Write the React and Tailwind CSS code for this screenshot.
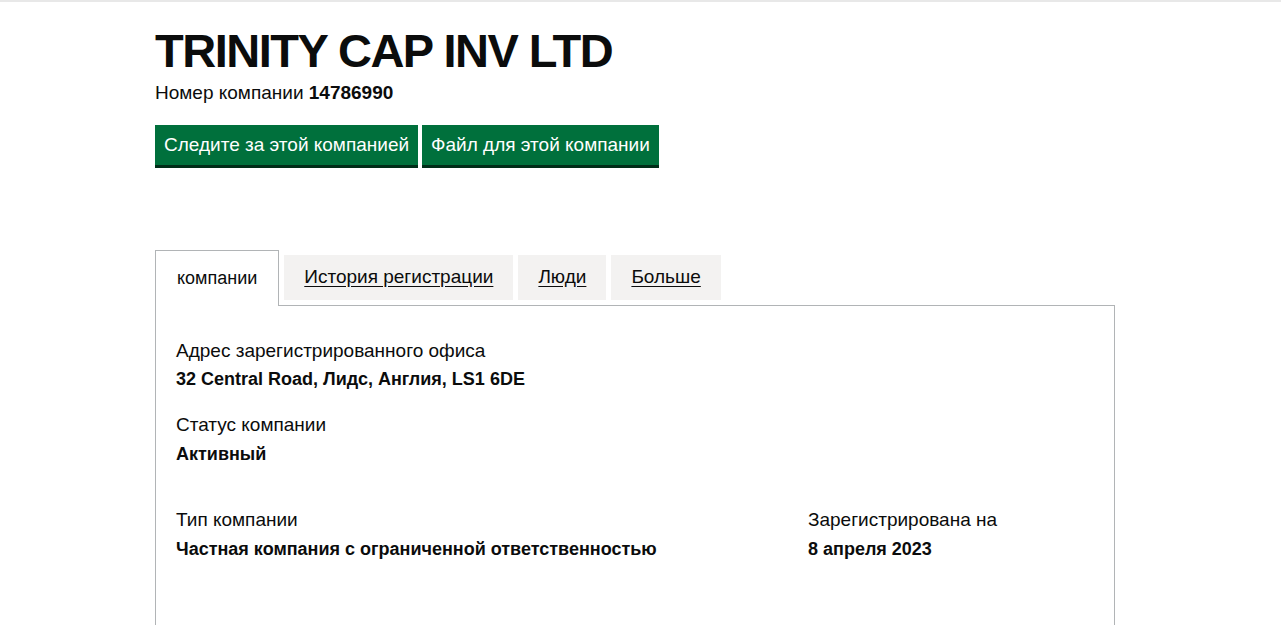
export default function App() {
  return (
    <div className="min-h-[625px] bg-white border-t-2 border-[#e8e8e8] text-[#0b0c0c]">
      <div className="w-[960px] ml-[155px] font-['Liberation_Sans',Arial,sans-serif]">
        <h1 className="pt-[24px] text-[47px] leading-[50px] font-bold tracking-[-1.5px]">TRINITY CAP INV LTD</h1>
        <p className="mt-[4px] text-[19px] leading-[25px]">
          Номер компании <strong className="font-bold">14786990</strong>
        </p>
        <div className="mt-[20px] flex gap-[4px]">
          <a className="h-[40px] px-[9px] flex items-center bg-[#00703c] text-white text-[19px] shadow-[0_3px_0_#002d18] mb-[3px]">
            Следите за этой компанией
          </a>
          <a className="h-[40px] px-[9px] flex items-center bg-[#00703c] text-white text-[19px] shadow-[0_3px_0_#002d18] mb-[3px]">
            Файл для этой компании
          </a>
        </div>

        <div className="mt-[82px]">
          <ul className="flex items-end">
            <li className="h-[56px] px-[21px] flex items-center border border-b-0 border-[#b1b4b6] bg-white text-[18px] -mb-px relative z-10">
              компании
            </li>
            <li className="ml-[5px] h-[45px] mb-[5px] px-[20px] flex items-center bg-[#f3f2f1] text-[19px] underline underline-offset-[3px]">
              История регистрации
            </li>
            <li className="ml-[5px] h-[45px] mb-[5px] px-[20px] flex items-center bg-[#f3f2f1] text-[19px] underline underline-offset-[3px]">
              Люди
            </li>
            <li className="ml-[5px] h-[45px] mb-[5px] px-[20px] flex items-center bg-[#f3f2f1] text-[19px] underline underline-offset-[3px]">
              Больше
            </li>
          </ul>
          <div className="border border-[#b1b4b6] h-[330px] px-[20px] pt-[32px]">
            <dl className="leading-[25px]">
              <dt className="text-[19px]">Адрес зарегистрированного офиса</dt>
              <dd className="mt-[4px] text-[18px] font-bold">32 Central Road, Лидс, Англия, LS1 6DE</dd>
              <dt className="mt-[20px] text-[19px]">Статус компании</dt>
              <dd className="mt-[5px] text-[18px] font-bold">Активный</dd>
            </dl>
            <div className="mt-[40px] flex leading-[25px]">
              <dl className="w-[632px]">
                <dt className="text-[19px]">Тип компании</dt>
                <dd className="mt-[5px] text-[18px] font-bold">Частная компания с ограниченной ответственностью</dd>
              </dl>
              <dl>
                <dt className="text-[19px]">Зарегистрирована на</dt>
                <dd className="mt-[5px] text-[18px] font-bold">8 апреля 2023</dd>
              </dl>
            </div>
          </div>
        </div>
      </div>
    </div>
  );
}
